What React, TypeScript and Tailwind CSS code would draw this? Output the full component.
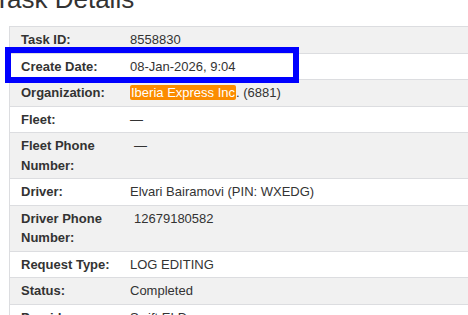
import React, {ReactNode} from 'react';

interface DetailRow {
  label: string;
  value: ReactNode;
  indent?: boolean;
}

const rows: DetailRow[] = [
  {label: 'Task ID:', value: '8558830'},
  {label: 'Create Date:', value: '08-Jan-2026, 9:04'},
  {
    label: 'Organization:',
    value: (
      <>
        <span className="rounded-[2px] bg-[#fb8c00] px-px text-white">
          Iberia Express Inc
        </span>
        . (6881)
      </>
    ),
  },
  {label: 'Fleet:', value: '—'},
  {label: 'Fleet Phone Number:', value: '—', indent: true},
  {label: 'Driver:', value: 'Elvari Bairamovi (PIN: WXEDG)'},
  {label: 'Driver Phone Number:', value: '12679180582', indent: true},
  {label: 'Request Type:', value: 'LOG EDITING'},
  {label: 'Status:', value: 'Completed'},
  {label: 'Provider:', value: 'Swift ELD'},
];

export default function App() {
  return (
    <div className="relative h-[315px] w-[468px] overflow-hidden bg-white font-['Liberation_Sans',Arial,sans-serif] text-[#333]">
      <h1 className="-mt-[16px] mb-[12px] -ml-[6px] text-[26px] leading-[30px] font-normal text-[#333]">
        Task Details
      </h1>
      <div className="ml-[9px] w-[500px] border-t border-l border-[#dcdde0] text-[13px] leading-[19.5px]">
        {rows.map((row, index) => (
          <DetailLine key={row.label} row={row} shaded={index % 2 === 0} />
        ))}
      </div>
      {/* highlight around the create date row */}
      <div className="pointer-events-none absolute top-[47px] left-[5px] h-[36px] w-[294px] border-[6px] border-[#0000ff]" />
    </div>
  );
}

function DetailLine({row, shaded}: {row: DetailRow; shaded: boolean}) {
  return (
    <div
      className={`flex border-b border-[#dcdde0] ${shaded ? 'bg-[#f1f1f1]' : 'bg-white'}`}
    >
      <div className="w-[120px] shrink-0 py-[3px] pr-[9px] pl-[11px] font-bold">
        {row.label}
      </div>
      <div className={`py-[3px] ${row.indent ? 'pl-[4px]' : ''}`}>
        {row.value}
      </div>
    </div>
  );
}
